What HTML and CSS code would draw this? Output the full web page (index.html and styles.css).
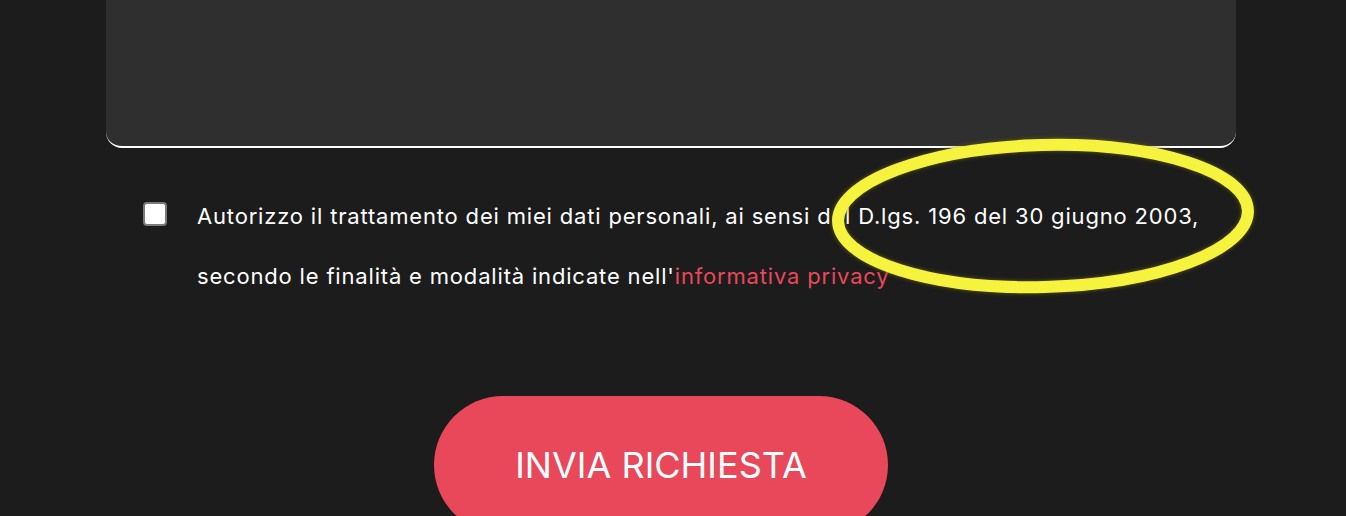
FILE: index.html
```html
<!DOCTYPE html>
<html lang="it">

<head>
  <meta charset="UTF-8">
  <meta name="viewport" content="width=device-width, initial-scale=1.0">
  <title>Richiesta</title>
  <link rel="stylesheet" href="styles.css">
</head>

<body>
  <div class="container">
    <div class="field">
      <textarea class="message" id="message"></textarea>
    </div>
    <div class="privacy">
      <input type="checkbox" id="privacy" class="check">
      <label for="privacy">
        Autorizzo il trattamento dei miei dati personali, ai sensi del D.lgs. 196 del 30 giugno 2003,<br>
        secondo le finalità e modalità indicate nell'<a href="#">informativa privacy</a>
      </label>
    </div>
    <div class="actions">
      <button class="btn">INVIA RICHIESTA</button>
    </div>
  </div>

  <svg class="mark" width="440" height="170" viewBox="0 0 440 170">
    <ellipse cx="220" cy="84" rx="205" ry="71" fill="none" stroke="#f6f33f" stroke-width="12"
      transform="rotate(-1.5 220 84)" />
  </svg>
</body>

</html>
```

FILE: styles.css
```css
body {
  margin: 0;
  padding-right: 4px;
  background-color: #1c1c1c;
  color: #ffffff;
  font-family: "Inter", "Liberation Sans", sans-serif;
  overflow: hidden;
}

.container {
  width: 1130px;
  margin: 0 auto;
}

.field {
  margin-top: -59px;
}

.message {
  display: block;
  width: 100%;
  height: 207px;
  box-sizing: border-box;
  background-color: #2f2f2f;
  border: none;
  border-bottom: 2px solid #ffffff;
  border-radius: 0 0 16px 16px;
  resize: none;
}

.privacy {
  display: flex;
  align-items: flex-start;
  margin-top: 54px;
  padding-left: 37px;
}

.check {
  appearance: none;
  width: 24px;
  height: 24px;
  margin: 0;
  flex-shrink: 0;
  box-sizing: border-box;
  background-color: #ffffff;
  border: 2px solid #7a7a7a;
  border-radius: 4px;
}

.privacy label {
  margin-left: 30px;
  margin-top: -16px;
  font-size: 22px;
  line-height: 60px;
  letter-spacing: 0.82px;
  white-space: nowrap;
}

.privacy a {
  color: #e8485a;
  text-decoration: none;
}

.actions {
  display: flex;
  justify-content: center;
  margin-top: 90px;
  padding-right: 20px;
}

.btn {
  width: 454px;
  height: 138px;
  border: none;
  border-radius: 69px;
  background-color: #e8485a;
  color: #ffffff;
  font-family: "Inter", "Liberation Sans", sans-serif;
  font-size: 36px;
  padding-top: 0;
}

.mark {
  position: absolute;
  left: 823px;
  top: 132px;
  filter: drop-shadow(0 0 2px rgba(120, 110, 0, 0.8));
}
```
